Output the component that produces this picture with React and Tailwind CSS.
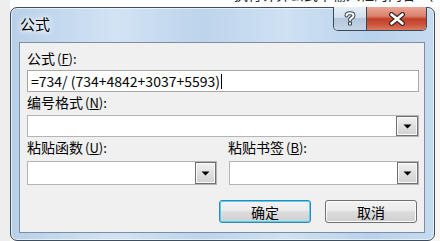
import React from "react";

function Tri() {
  return (
    <svg width="9" height="5" viewBox="0 0 9 5">
      <path d="M0.5 0.5 H8.5 L4.5 4.5 Z" fill="#000" />
    </svg>
  );
}

function DropBtn({ w }) {
  return (
    <div
      className={`${w} h-full flex items-center justify-center border border-[#707070] bg-[linear-gradient(#f2f2f2,#e0e0e0_50%,#d0d0d0)] shadow-[inset_0_0_0_1px_#fafafa]`}
    >
      <Tri />
    </div>
  );
}

function Label({ text, k }) {
  return (
    <div className="h-[18px] leading-[18px] text-[14px] whitespace-nowrap">
      {text}
      <span className="text-[13px] ml-[2px]">(</span>
      <span className="underline text-[13px]">{k}</span>
      <span className="text-[13px]">):</span>
    </div>
  );
}

export default function App() {
  return (
    <div className="w-[440px] h-[241px] flex bg-white overflow-hidden text-black font-['Noto_Sans_CJK_SC','Noto_Sans',sans-serif]">
      <div className="w-[10px] shrink-0 bg-[#eeeeee]" />
      <div className="flex-1 flex flex-col bg-[#f7f7f7]">
        <div className="h-[7px] shrink-0 overflow-hidden bg-white">
          <div className="-mt-[15px] pl-[224px] text-[14px] leading-[18px] whitespace-nowrap text-[#222]">
            执行计算公式中输入框的内容 （
          </div>
        </div>
        <div className="w-[425px] h-[234px] shrink-0 flex flex-col rounded-[7px] border border-[#3f4e5e] bg-[linear-gradient(90deg,#b8d0e9,#d2e3f4_25%,#bdd4ec_45%,#cfe1f3_65%,#b9d2eb_85%,#c6dbf0)] shadow-[inset_0_0_0_1px_rgba(255,255,255,0.6)]">
          <div className="h-[34px] shrink-0 flex items-start justify-between">
            <div className="pl-[9px] pt-[7px] text-[15px] leading-[18px] [text-shadow:0_0_6px_#fff,0_0_10px_#fff,0_0_3px_#fff]">
              公式
            </div>
            <div className="flex -mt-[1px] mr-[7px] h-[24px] rounded-b-[5px] border border-t-0 border-[#3b4856] overflow-hidden">
              <div className="w-[33px] h-full flex items-center justify-center bg-[linear-gradient(#e6eef7,#d4e0ed_45%,#b5c7db_50%,#c4d5e7)] border-r border-[#3b4856]">
                <svg width="12" height="15" viewBox="0 0 12 15">
                  <path
                    d="M2.5 4.5 C2.5 1.5 9.5 1.5 9.5 4.5 C9.5 6.8 6 6.8 6 9"
                    fill="none"
                    stroke="#3a4450"
                    strokeWidth="4"
                    strokeLinecap="round"
                  />
                  <path
                    d="M2.5 4.5 C2.5 1.5 9.5 1.5 9.5 4.5 C9.5 6.8 6 6.8 6 9"
                    fill="none"
                    stroke="#fff"
                    strokeWidth="2"
                    strokeLinecap="round"
                  />
                  <rect x="4" y="10.5" width="4" height="4" rx="1" fill="#3a4450" />
                  <rect x="5" y="11.5" width="2" height="2" fill="#fff" />
                </svg>
              </div>
              <div className="w-[59px] h-full flex items-center justify-center bg-[linear-gradient(#eaa898,#d9806b_40%,#c43f28_52%,#cb523a_75%,#d97a60)]">
                <svg width="18" height="14" viewBox="0 0 18 14">
                  <path d="M3.5 2.5 L14.5 11.5 M14.5 2.5 L3.5 11.5" stroke="#3b2a26" strokeWidth="5" strokeLinecap="round" />
                  <path d="M3.5 2.5 L14.5 11.5 M14.5 2.5 L3.5 11.5" stroke="#fff" strokeWidth="2.6" strokeLinecap="round" />
                </svg>
              </div>
            </div>
          </div>
          <div className="ml-[8px] mr-[9px] h-[191px] shrink-0 border border-[#7f8e9f] bg-[#f0f0f0] pl-[7px] pr-[5px] pt-[6px] flex flex-col">
            <Label text="公式" k="F" />
            <div className="mt-[3px] w-[392px] h-[22px] border border-[#a7a7a7] bg-white flex items-center pl-[3px] text-[14px] leading-[16px] whitespace-nowrap">
              =734/ (734+4842+3037+5593)
              <span className="inline-block w-[1px] h-[15px] bg-black ml-[1px]" />
            </div>
            <div className="mt-[1px]">
              <Label text="编号格式" k="N" />
            </div>
            <div className="mt-[4px] w-[392px] h-[22px] border border-[#b4b4b4] bg-white flex justify-end">
              <DropBtn w="w-[22px]" />
            </div>
            <div className="mt-[1px] flex gap-[12px]">
              <div className="w-[190px] flex flex-col">
                <Label text="粘贴函数" k="U" />
                <div className="mt-[5px] h-[24px] border border-[#b4b4b4] bg-white flex justify-end">
                  <DropBtn w="w-[21px]" />
                </div>
              </div>
              <div className="w-[190px] flex flex-col">
                <div className="-ml-[1px]">
                  <Label text="粘贴书签" k="B" />
                </div>
                <div className="mt-[5px] h-[24px] border border-[#b4b4b4] bg-white flex justify-end">
                  <DropBtn w="w-[21px]" />
                </div>
              </div>
            </div>
            <div className="mt-[15px] flex justify-end gap-[14px] pr-[2px]">
              <div className="w-[92px] h-[23px] rounded-[3px] border border-[#3c7fb1] bg-[linear-gradient(#f2f2f2,#ebebeb_45%,#dddddd_50%,#cfcfcf)] shadow-[inset_0_0_0_1px_#48d8fb] flex items-center justify-center text-[14px] leading-[18px]">
                确定
              </div>
              <div className="w-[92px] h-[23px] rounded-[3px] border border-[#707070] bg-[linear-gradient(#f2f2f2,#ebebeb_45%,#dddddd_50%,#cfcfcf)] shadow-[inset_0_0_0_1px_#fcfcfc] flex items-center justify-center text-[14px] leading-[18px]">
                取消
              </div>
            </div>
          </div>
        </div>
      </div>
    </div>
  );
}
